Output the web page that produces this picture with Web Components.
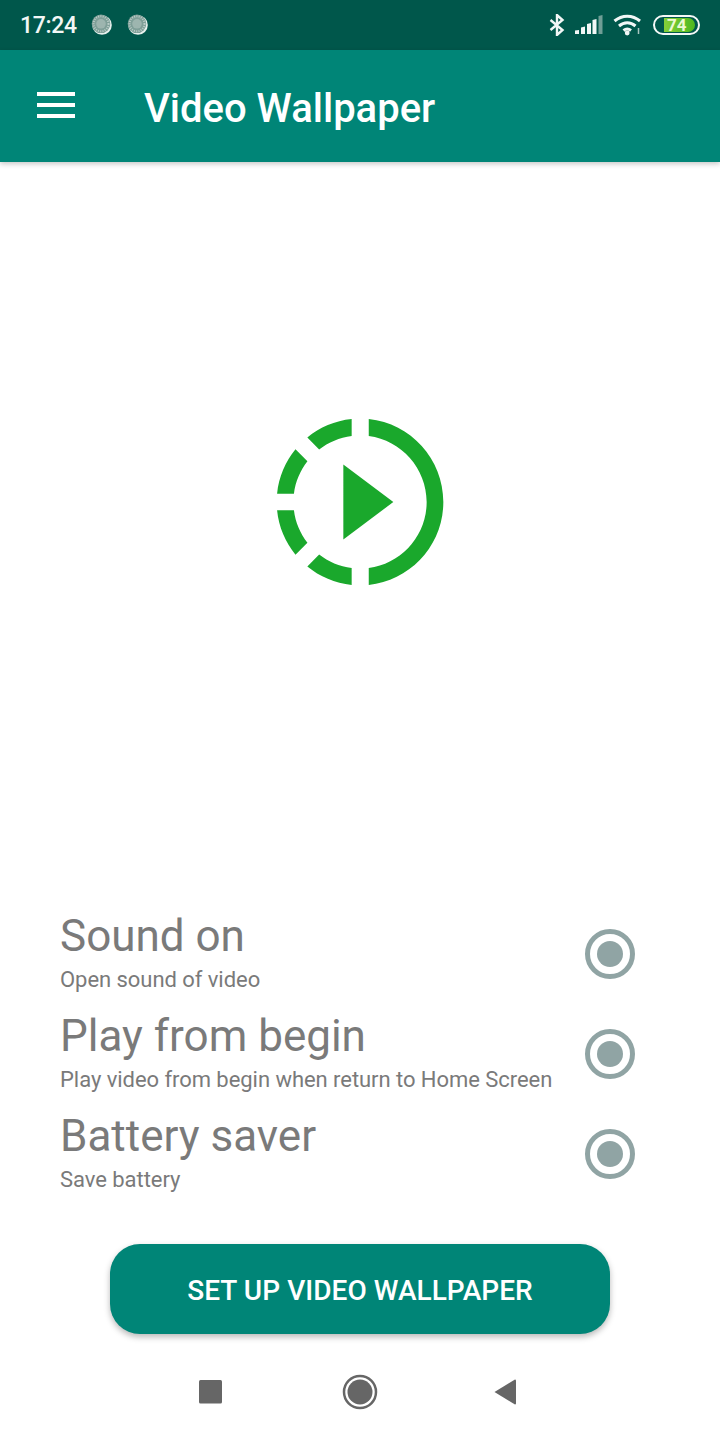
<!DOCTYPE html>
<html>
<head>
<meta charset="utf-8">
<title>Video Wallpaper</title>
<style>
  html, body { margin: 0; padding: 0; background: #fff; }
  body { width: 720px; height: 1440px; overflow: hidden; font-family: Roboto, "Noto Sans", sans-serif; }
  wallpaper-screen { height: 1440px; }
</style>
</head>
<body>
<wallpaper-screen>
  <status-bar slot="top" time="17:24"></status-bar>
  <app-bar slot="top">Video Wallpaper</app-bar>
  <hero-icon></hero-icon>
  <setting-row>
    <span slot="title">Sound on</span>
    Open sound of video
  </setting-row>
  <setting-row>
    <span slot="title">Play from begin</span>
    Play video from begin when return to Home Screen
  </setting-row>
  <setting-row>
    <span slot="title">Battery saver</span>
    Save battery
  </setting-row>
  <action-button>SET UP VIDEO WALLPAPER</action-button>
  <nav-bar></nav-bar>
</wallpaper-screen>

<script>
class WallpaperScreen extends HTMLElement {
  constructor () {
    super()
    this.attachShadow({ mode: 'open' })
    this.shadowRoot.innerHTML = `
      <style>
        :host { display: flex; flex-direction: column; width: 720px; background: #fff; }
        header { display: block; position: relative; z-index: 1; }
      </style>
      <header><slot name="top"></slot></header>
      <slot></slot>
    `
  }
}

class StatusBar extends HTMLElement {
  constructor () {
    super()
    this.attachShadow({ mode: 'open' })
  }

  connectedCallback () {
    const dot = `
      <svg class="dot" width="22" height="22" viewBox="0 0 22 22">
        <circle cx="11" cy="11" r="9.800" fill="#e6f0ed"/>
        <circle cx="10" cy="9.800" r="9.300" fill="#7f9f98"/>
        <circle cx="10" cy="9.800" r="7.500" fill="none" stroke="#bccdc8" stroke-width="2" stroke-dasharray="1 1.300"/>
        <circle cx="10" cy="9.800" r="4.800" fill="#9db5af"/>
      </svg>`
    this.shadowRoot.innerHTML = `
      <style>
        :host { display: flex; align-items: center; height: 50px; background: #00574b; color: #f2f7f6; padding: 0 20px 0 20px; box-sizing: border-box; }
        .time { font: 500 23px/50px Roboto, sans-serif; letter-spacing: -.3px; margin-right: 14px; position: relative; top: 1px; }
        .dot { margin-right: 14px; }
        .right { margin-left: auto; display: flex; align-items: center; }
        svg { display: block; }
        .battery { display: flex; align-items: center; width: 47px; height: 20px; box-sizing: border-box; border: 2.500px solid #f4f8f7; border-radius: 10px; margin-left: 10px; }
        .level { display: flex; align-items: center; width: 31px; height: 14px; margin-left: 9px; padding-left: 3px; box-sizing: border-box; border-radius: 0 7px 7px 0; background: linear-gradient(90deg, #85cf3a, #4fb81f); font: 700 17px/14px Roboto, sans-serif; color: #eef9d4; }
      </style>
      <span class="time">${this.getAttribute('time')}</span>
      ${dot}${dot}
      <div class="right">
        <svg width="16" height="22" viewBox="0 0 16 22" fill="none" stroke="#f2f7f6" stroke-width="2.400">
          <path d="M1.500 6l12 10-5.500 5V1l5.500 5-12 10"/>
        </svg>
        <svg style="margin-left:10px" width="28" height="20" viewBox="0 0 28 20" fill="#f2f7f6">
          <path d="M0 15.500l4-.5v4H0zM6 12.500l4-1V19H6zM12 9l4-1v11h-4zM17.500 5l4-1v15h-4z"/>
          <path d="M23.500 1l4-1v19h-4z" fill="#6f9e96"/>
        </svg>
        <svg style="margin-left:10px" width="30" height="22" viewBox="0 0 30 22" fill="none" stroke="#f2f7f6" stroke-width="3">
          <path d="M1.500 7c7.500-6.500 18-6.500 25.500 0"/>
          <path d="M6 12c5-4.300 11.500-4.300 16.500 0"/>
          <path d="M10.500 16.500c2.500-2 5-2 7.500 0"/>
          <circle cx="14.200" cy="19" r="2.400" fill="#f2f7f6" stroke="none"/>
          <path d="M25.500 14v6" stroke="#a9c6c0" stroke-width="1.500"/>
        </svg>
        <div class="battery"><span class="level">74</span></div>
      </div>
    `
  }
}

class AppBar extends HTMLElement {
  constructor () {
    super()
    this.attachShadow({ mode: 'open' })
    this.shadowRoot.innerHTML = `
      <style>
        :host { display: flex; align-items: center; height: 112px; padding-left: 37px; box-sizing: border-box; background: #008577; color: #fff; box-shadow: 0 2px 5px rgba(0, 0, 0, .22); }
        .menu { display: flex; flex-direction: column; gap: 7px; width: 38px; margin-right: 69px; margin-top: -2px; }
        .menu i { display: block; height: 4px; background: #fff; }
        h1 { margin: 6px 0 0; font: 500 40px/1 Roboto, sans-serif; }
      </style>
      <div class="menu"><i></i><i></i><i></i></div>
      <h1><slot></slot></h1>
    `
  }
}

class HeroIcon extends HTMLElement {
  constructor () {
    super()
    this.attachShadow({ mode: 'open' })
    this.shadowRoot.innerHTML = `
      <style>
        :host { display: flex; justify-content: center; height: 742px; padding-top: 240px; box-sizing: border-box; }
        svg { display: block; }
      </style>
      <svg width="200" height="200" viewBox="0 0 24 24" fill="#1aa82c">
        <path d="M10 7.500v9l6-4.500zM11 4.070V2.050c-2.010.2-3.840 1-5.320 2.210L7.100 5.690c1.110-.86 2.440-1.440 3.900-1.620zM5.690 7.100L4.260 5.680C3.050 7.160 2.250 8.990 2.050 11h2.020c.18-1.460.76-2.790 1.620-3.900zM4.070 13H2.050c.2 2.010 1 3.840 2.210 5.320l1.430-1.430c-.86-1.100-1.440-2.430-1.620-3.890zm1.610 6.740C7.160 20.950 9 21.750 11 21.950v-2.020c-1.460-.18-2.790-.76-3.900-1.620l-1.420 1.430zM22 12c0 5.160-3.920 9.420-8.950 9.950v-2.020C16.970 19.410 20 16.050 20 12s-3.030-7.410-6.950-7.930V2.050C18.080 2.580 22 6.840 22 12z"/>
      </svg>
    `
  }
}

class SettingRow extends HTMLElement {
  constructor () {
    super()
    this.attachShadow({ mode: 'open' })
    this.shadowRoot.innerHTML = `
      <style>
        :host { display: flex; align-items: center; height: 100px; padding: 0 85px 0 60px; box-sizing: border-box; color: #7a7a7a; }
        .text { flex: 1; display: flex; flex-direction: column; }
        .title { font: 400 44px/52px Roboto, sans-serif; margin-top: -5px; margin-bottom: 5px; }
        .sub { font: 400 22px/26px Roboto, sans-serif; letter-spacing: -.05px; }
        .radio { width: 50px; height: 50px; box-sizing: border-box; border: 5px solid #90a4a4; border-radius: 50%; display: flex; align-items: center; justify-content: center; }
        .radio i { display: block; width: 26px; height: 26px; border-radius: 50%; background: #90a4a4; }
      </style>
      <div class="text">
        <div class="title"><slot name="title"></slot></div>
        <div class="sub"><slot></slot></div>
      </div>
      <div class="radio"><i></i></div>
    `
  }
}

class ActionButton extends HTMLElement {
  constructor () {
    super()
    this.attachShadow({ mode: 'open' })
    this.shadowRoot.innerHTML = `
      <style>
        :host { display: flex; justify-content: center; padding-top: 40px; }
        button { width: 500px; height: 90px; border: 0; border-radius: 30px; background: #008577; color: #fff; font: 500 28px/1 Roboto, sans-serif; letter-spacing: .05px; padding: 4px 0 0; box-shadow: 0 3px 6px rgba(0, 0, 0, .28); }
      </style>
      <button><slot></slot></button>
    `
  }
}

class NavBar extends HTMLElement {
  constructor () {
    super()
    this.attachShadow({ mode: 'open' })
    this.shadowRoot.innerHTML = `
      <style>
        :host { display: flex; align-items: center; height: 106px; padding: 10px 0 0 199px; box-sizing: border-box; }
        svg { display: block; }
        .home { margin: 0 115px 0 119.500px; }
      </style>
      <svg width="23" height="24" viewBox="0 0 23 24"><rect width="23" height="23.500" rx="1.500" fill="#666"/></svg>
      <svg class="home" width="36" height="36" viewBox="0 0 36 36">
        <circle cx="18" cy="18" r="16" fill="none" stroke="#666" stroke-width="2.500"/>
        <circle cx="18" cy="18" r="12.500" fill="#666"/>
      </svg>
      <svg width="24" height="28" viewBox="0 0 24 28"><path d="M22 1.500a1 1 0 0 1 1 .9v23.200a1 1 0 0 1-1 .9L1.500 14z" fill="#666"/></svg>
    `
  }
}

customElements.define('wallpaper-screen', WallpaperScreen)
customElements.define('status-bar', StatusBar)
customElements.define('app-bar', AppBar)
customElements.define('hero-icon', HeroIcon)
customElements.define('setting-row', SettingRow)
customElements.define('action-button', ActionButton)
customElements.define('nav-bar', NavBar)
</script>
</body>
</html>
